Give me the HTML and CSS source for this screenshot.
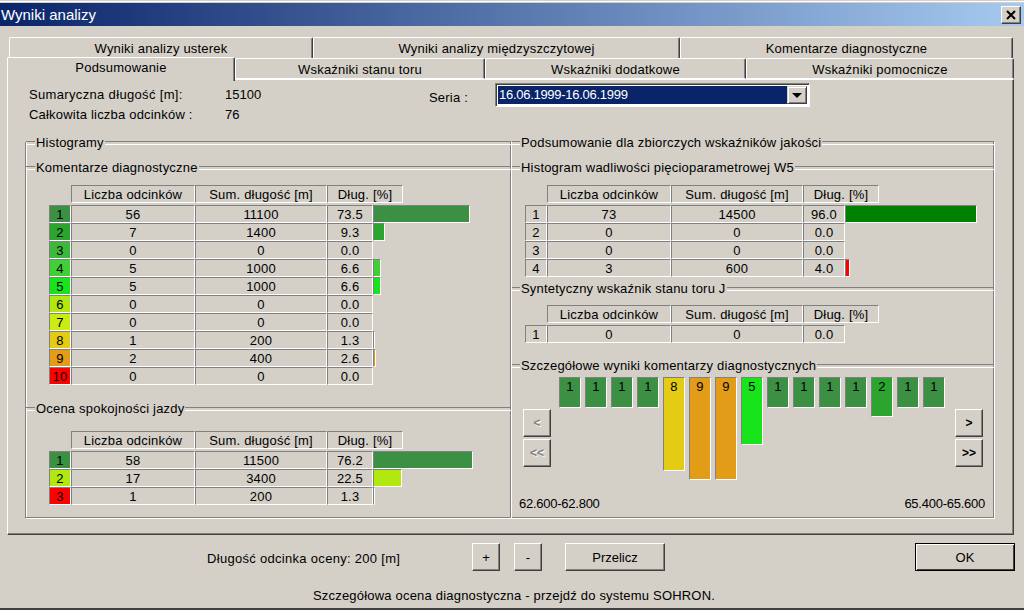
FILE: index.html
```html
<!DOCTYPE html>
<html lang="pl">
<head>
    <meta charset="UTF-8">
    <title>Wyniki analizy</title>
    <link rel="stylesheet" href="styles.css">
</head>
<body>
    <div class="window">
        <div class="titlebar">
            <span class="title-text">Wyniki analizy</span>
            <button class="close-button">
                <svg width="10" height="10" viewBox="0 0 10 10"><path d="M1 1 L9 9 M9 1 L1 9" stroke="#000" stroke-width="2" fill="none"/></svg>
            </button>
        </div>

        <div class="tabs tabs-back">
            <div class="tab">Wyniki analizy usterek</div>
            <div class="tab">Wyniki analizy międzyszczytowej</div>
            <div class="tab">Komentarze diagnostyczne</div>
        </div>
        <div class="tabs tabs-front">
            <div class="tab active">Podsumowanie</div>
            <div class="tab">Wskaźniki stanu toru</div>
            <div class="tab">Wskaźniki dodatkowe</div>
            <div class="tab">Wskaźniki pomocnicze</div>
        </div>

        <div class="panel">
            <div class="summary">
                <div class="summary-stats">
                    <span class="stat-label">Sumaryczna długość [m]:</span><span class="stat-value">15100</span>
                    <span>Całkowita liczba odcinków :</span><span class="stat-value">76</span>
                </div>
                <span class="series-label">Seria :</span>
                <div class="combo">
                    <span class="combo-value">16.06.1999-16.06.1999</span>
                    <span class="combo-arrow"><span class="arrow-down"></span></span>
                </div>
            </div>

            <div class="columns">
                <!-- Left column -->
                <div class="column column-left">
                    <div class="group-title first"><span>Histogramy</span></div>
                    <div class="group-title sub"><span>Komentarze diagnostyczne</span></div>
                    <div class="grid grid-left">
                        <div class="row head">
                            <div class="cell none"></div>
                            <div class="cell c1">Liczba odcinków</div>
                            <div class="cell c2">Sum. długość [m]</div>
                            <div class="cell c3-head">Dług. [%]</div>
                        </div>
                        <div class="row"><div class="cell idx k1">1</div><div class="cell c1">56</div><div class="cell c2">11100</div><div class="cell c3">73.5</div><div class="bar k1" style="width: 97px"></div></div>
                        <div class="row"><div class="cell idx k2">2</div><div class="cell c1">7</div><div class="cell c2">1400</div><div class="cell c3">9.3</div><div class="bar k2" style="width: 12px"></div></div>
                        <div class="row"><div class="cell idx k3">3</div><div class="cell c1">0</div><div class="cell c2">0</div><div class="cell c3">0.0</div></div>
                        <div class="row"><div class="cell idx k4">4</div><div class="cell c1">5</div><div class="cell c2">1000</div><div class="cell c3">6.6</div><div class="bar k4" style="width: 8px"></div></div>
                        <div class="row"><div class="cell idx k5">5</div><div class="cell c1">5</div><div class="cell c2">1000</div><div class="cell c3">6.6</div><div class="bar k5" style="width: 8px"></div></div>
                        <div class="row"><div class="cell idx k6">6</div><div class="cell c1">0</div><div class="cell c2">0</div><div class="cell c3">0.0</div></div>
                        <div class="row"><div class="cell idx k7">7</div><div class="cell c1">0</div><div class="cell c2">0</div><div class="cell c3">0.0</div></div>
                        <div class="row"><div class="cell idx k8">8</div><div class="cell c1">1</div><div class="cell c2">200</div><div class="cell c3">1.3</div><div class="bar k8" style="width: 2px"></div></div>
                        <div class="row"><div class="cell idx k9">9</div><div class="cell c1">2</div><div class="cell c2">400</div><div class="cell c3">2.6</div><div class="bar k9" style="width: 3px"></div></div>
                        <div class="row"><div class="cell idx k10">10</div><div class="cell c1">0</div><div class="cell c2">0</div><div class="cell c3">0.0</div></div>
                    </div>

                    <div class="group-title sub-ride"><span>Ocena spokojności jazdy</span></div>
                    <div class="grid grid-left grid-ride">
                        <div class="row head">
                            <div class="cell none"></div>
                            <div class="cell c1">Liczba odcinków</div>
                            <div class="cell c2">Sum. długość [m]</div>
                            <div class="cell c3-head">Dług. [%]</div>
                        </div>
                        <div class="row"><div class="cell idx k1">1</div><div class="cell c1">58</div><div class="cell c2">11500</div><div class="cell c3">76.2</div><div class="bar k1" style="width: 100px"></div></div>
                        <div class="row"><div class="cell idx k6">2</div><div class="cell c1">17</div><div class="cell c2">3400</div><div class="cell c3">22.5</div><div class="bar k6" style="width: 29px"></div></div>
                        <div class="row"><div class="cell idx k10">3</div><div class="cell c1">1</div><div class="cell c2">200</div><div class="cell c3">1.3</div><div class="bar" style="width: 2px"></div></div>
                    </div>
                </div>

                <!-- Right column -->
                <div class="column column-right">
                    <div class="group-title first"><span>Podsumowanie dla zbiorczych wskaźników jakości</span></div>
                    <div class="group-title sub"><span>Histogram wadliwości pięcioparametrowej W5</span></div>
                    <div class="grid grid-right">
                        <div class="row head">
                            <div class="cell none"></div>
                            <div class="cell c1">Liczba odcinków</div>
                            <div class="cell c2">Sum. długość [m]</div>
                            <div class="cell c3-head">Dług. [%]</div>
                        </div>
                        <div class="row"><div class="cell idx">1</div><div class="cell c1">73</div><div class="cell c2">14500</div><div class="cell c3">96.0</div><div class="bar good" style="width: 132px"></div></div>
                        <div class="row"><div class="cell idx">2</div><div class="cell c1">0</div><div class="cell c2">0</div><div class="cell c3">0.0</div></div>
                        <div class="row"><div class="cell idx">3</div><div class="cell c1">0</div><div class="cell c2">0</div><div class="cell c3">0.0</div></div>
                        <div class="row"><div class="cell idx">4</div><div class="cell c1">3</div><div class="cell c2">600</div><div class="cell c3">4.0</div><div class="bar k10" style="width: 5px"></div></div>
                    </div>

                    <div class="group-title sub-synth"><span>Syntetyczny wskaźnik stanu toru J</span></div>
                    <div class="grid grid-right grid-synth">
                        <div class="row head">
                            <div class="cell none"></div>
                            <div class="cell c1">Liczba odcinków</div>
                            <div class="cell c2">Sum. długość [m]</div>
                            <div class="cell c3-head">Dług. [%]</div>
                        </div>
                        <div class="row"><div class="cell idx">1</div><div class="cell c1">0</div><div class="cell c2">0</div><div class="cell c3">0.0</div></div>
                    </div>

                    <div class="group-title sub-detail"><span>Szczegółowe wyniki komentarzy diagnostycznych</span></div>
                    <div class="strip">
                        <div class="strip-nav">
                            <button class="button nav disabled">&lt;</button>
                            <button class="button nav disabled">&lt;&lt;</button>
                        </div>
                        <div class="strip-bars">
                            <div class="strip-bar k1" style="height: 31px">1</div>
                            <div class="strip-bar k1" style="height: 31px">1</div>
                            <div class="strip-bar k1" style="height: 31px">1</div>
                            <div class="strip-bar k1" style="height: 31px">1</div>
                            <div class="strip-bar k8" style="height: 94px">8</div>
                            <div class="strip-bar k9" style="height: 103px">9</div>
                            <div class="strip-bar k9" style="height: 103px">9</div>
                            <div class="strip-bar k5" style="height: 68px">5</div>
                            <div class="strip-bar k1" style="height: 31px">1</div>
                            <div class="strip-bar k1" style="height: 31px">1</div>
                            <div class="strip-bar k1" style="height: 31px">1</div>
                            <div class="strip-bar k1" style="height: 31px">1</div>
                            <div class="strip-bar k2" style="height: 40px">2</div>
                            <div class="strip-bar k1" style="height: 31px">1</div>
                            <div class="strip-bar k1" style="height: 31px">1</div>
                        </div>
                        <div class="strip-nav">
                            <button class="button nav">&gt;</button>
                            <button class="button nav">&gt;&gt;</button>
                        </div>
                    </div>
                    <div class="strip-labels">
                        <span>62.600-62.800</span>
                        <span>65.400-65.600</span>
                    </div>
                </div>
            </div>
        </div>

        <div class="footer">
            <span class="footer-label">Długość odcinka oceny: 200 [m]</span>
            <button class="button small">+</button>
            <button class="button small minus">-</button>
            <button class="button wide">Przelicz</button>
            <button class="button wide ok">OK</button>
        </div>
        <div class="status">Szczegółowa ocena diagnostyczna - przejdź do systemu SOHRON.</div>
    </div>
</body>
</html>
```

FILE: styles.css
```css
* {
    box-sizing: border-box;
}
html, body {
    margin: 0;
    padding: 0;
    height: 610px;
    overflow: hidden;
}
body {
    background-color: #d4d0c8;
    color: #000;
    font-family: "Liberation Sans", Arial, sans-serif;
    font-size: 13px;
    letter-spacing: 0.2px;
}
.window {
    height: 610px;
    padding-top: 3px;
    border-bottom: 2px solid #404040;
    box-shadow: inset 0 1px 0 #d4d0c8, inset 0 2px 0 #fff;
}

/* Title bar */
.titlebar {
    display: flex;
    align-items: center;
    justify-content: space-between;
    height: 23px;
    padding: 0 3px 0 1px;
    background: linear-gradient(to right, #0a246a, #a6caf0);
}
.title-text {
    color: #fff;
    font-size: 15px;
    letter-spacing: 0;
}
.close-button {
    display: flex;
    align-items: center;
    justify-content: center;
    width: 20px;
    height: 18px;
    padding: 0;
    background-color: #d4d0c8;
    border: 1px solid;
    border-color: #fff #404040 #404040 #fff;
    box-shadow: inset -1px -1px 0 #808080;
}

/* Tabs */
.tabs {
    display: flex;
    height: 21px;
}
.tabs-back {
    margin: 11px 0 0 9px;
}
.tabs-front {
    margin-left: 7px;
    position: relative;
    z-index: 1;
}
.tab {
    height: 21px;
    line-height: 21px;
    text-align: center;
    border-top: 1px solid #fff;
    border-left: 1px solid #fff;
    border-right: 1px solid #404040;
    border-radius: 2px 2px 0 0;
    background-color: #d4d0c8;
    box-shadow: inset -1px 0 0 #808080;
}
.tabs-back .tab:nth-child(1) { width: 304px; }
.tabs-back .tab:nth-child(2) { width: 367px; }
.tabs-back .tab:nth-child(3) { width: 333px; }
.tabs-front .tab:nth-child(1) { width: 228px; }
.tabs-front .tab:nth-child(2) { width: 250px; }
.tabs-front .tab:nth-child(3) { width: 261px; }
.tabs-front .tab:nth-child(4) { width: 268px; }
.tabs-front .tab {
    border-bottom: 1px solid #fff;
    line-height: 21px;
}
.tabs-front .tab.active {
    height: 24px;
    margin-top: -1px;
    line-height: 20px;
    border-bottom: none;
}

/* Panel */
.panel {
    width: 1007px;
    height: 456px;
    margin-left: 7px;
    padding: 0 0 0 17px;
    border-top: 1px solid #fff;
    border-left: 1px solid #fff;
    border-right: 1px solid #404040;
    border-bottom: 1px solid #404040;
    box-shadow: inset -1px -1px 0 #808080;
}
.summary {
    display: flex;
    height: 55px;
    padding: 5px 0 0 4px;
}
.summary-stats {
    display: grid;
    grid-template-columns: 196px 60px;
    grid-auto-rows: 20px;
    line-height: 20px;
    width: 400px;
}
.stat-label {
    letter-spacing: 0.34px;
}
.stat-value {
    letter-spacing: 0;
}
.series-label {
    width: 66px;
    line-height: 26px;
}
.combo {
    display: flex;
    width: 315px;
    height: 24px;
    margin-top: -2px;
    padding: 2px;
    background-color: #fff;
    border: 1px solid;
    border-color: #808080 #fff #fff #808080;
    box-shadow: inset 1px 1px 0 #404040;
}
.combo-value {
    flex: 1;
    padding-left: 1px;
    background-color: #0a246a;
    color: #fff;
    line-height: 18px;
    letter-spacing: -0.28px;
}
.combo-arrow {
    display: flex;
    align-items: center;
    justify-content: center;
    width: 20px;
    background-color: #d4d0c8;
    border: 1px solid;
    border-color: #d4d0c8 #404040 #404040 #d4d0c8;
    box-shadow: inset 1px 1px 0 #fff, inset -1px -1px 0 #808080;
}
.arrow-down {
    border-left: 5px solid transparent;
    border-right: 5px solid transparent;
    border-top: 5px solid #000;
}

/* Group boxes */
.columns {
    display: grid;
    grid-template-columns: 487px 483px;
    height: 384px;
}
.column {
    height: 377px;
    margin-top: 7px;
    border-bottom: 1px solid #fff;
    box-shadow: inset 0 -1px 0 #808080;
}
.column-left {
    border-left: 1px solid #808080;
    border-right: 1px solid #fff;
    box-shadow: inset 0 -1px 0 #808080, inset 1px 0 0 #fff, inset -1px 0 0 #808080;
}
.column-right {
    border-right: 1px solid #fff;
    box-shadow: inset 0 -1px 0 #808080, inset -1px 0 0 #808080;
}
.group-title {
    display: flex;
    align-items: center;
    height: 16px;
    line-height: 16px;
    white-space: nowrap;
}
.group-title::before,
.group-title::after {
    content: "";
    height: 2px;
    border-top: 1px solid #808080;
    border-bottom: 1px solid #fff;
}
.group-title::before {
    width: 9px;
}
.group-title::after {
    flex: 1;
}
.group-title span {
    padding: 0 1px;
}
.column-right .group-title::before {
    width: 8px;
}
.first {
    margin-top: -7px;
}
.sub {
    margin-top: 9px;
}
.sub-ride {
    margin-top: 16px;
}
.sub-synth {
    margin-top: 4px;
}
.sub-detail {
    margin-top: 15px;
}

/* Data grids */
.grid {
    margin-top: 9px;
}
.grid-left {
    margin-left: 23px;
}
.grid-right {
    margin-left: 13px;
}
.grid-ride {
    margin-top: 14px;
}
.grid-synth {
    margin-top: 8px;
}
.row {
    display: flex;
    height: 18px;
}
.row.head {
    margin-bottom: 2px;
}
.cell, .bar, .strip-bar {
    border: 1px solid;
    border-color: #808080 #fff #fff #808080;
}
.cell {
    height: 18px;
    line-height: 17px;
    text-align: center;
}
.none {
    visibility: hidden;
}
.idx, .none {
    width: 22px;
}
.c1 {
    width: 124px;
}
.c2 {
    width: 132px;
}
.c3 {
    width: 46px;
}
.c3-head {
    width: 76px;
}
.grid-right .c3 {
    width: 42px;
}
.bar {
    height: 18px;
}
.good { background-color: #008000; }
.k1 { background-color: #3c9044; }
.k2 { background-color: #2ca430; }
.k3 { background-color: #3cb83c; }
.k4 { background-color: #40cf34; }
.k5 { background-color: #18e41c; }
.k6 { background-color: #b0e810; }
.k7 { background-color: #c8ec14; }
.k8 { background-color: #e4cc14; }
.k9 { background-color: #e29c18; }
.k10 { background-color: #ff0000; }

/* Detail strip */
.strip {
    display: flex;
    height: 117px;
    margin-top: 3px;
    padding-left: 11px;
}
.strip-nav {
    display: flex;
    flex-direction: column;
    gap: 2px;
    padding-top: 32px;
}
.strip-bars {
    display: flex;
    align-items: flex-start;
    gap: 4px;
    width: 386px;
    margin: 0 10px 0 8px;
}
.strip-bar {
    width: 22px;
    line-height: 18px;
    text-align: center;
}
.strip-labels {
    display: flex;
    justify-content: space-between;
    height: 20px;
    line-height: 20px;
    padding: 0 9px 0 7px;
    letter-spacing: -0.25px;
}

/* Buttons */
.button {
    height: 28px;
    padding: 0;
    font-family: inherit;
    font-size: 13px;
    color: #000;
    background-color: #d4d0c8;
    border: 1px solid;
    border-color: #fff #404040 #404040 #fff;
    box-shadow: inset -1px -1px 0 #808080;
}
.nav, .small {
    width: 28px;
}
.nav {
    font-size: 12px;
    font-weight: bold;
}
.disabled {
    color: #808080;
    text-shadow: 1px 1px 0 #fff;
}
.wide {
    width: 100px;
}
.minus {
    margin-left: 14px;
}
.small + .wide {
    margin-left: 23px;
}
.ok {
    margin-left: auto;
    border-color: #000;
    box-shadow: inset 1px 1px 0 #fff, inset -1px -1px 0 #404040;
}

/* Footer */
.footer {
    display: flex;
    align-items: center;
    height: 28px;
    margin-top: 8px;
    padding: 0 9px 0 207px;
}
.footer-label {
    width: 265px;
    padding-top: 2px;
    letter-spacing: 0.3px;
}
.status {
    height: 20px;
    margin-top: 15px;
    line-height: 20px;
    text-align: center;
    padding-left: 4px;
}
```
